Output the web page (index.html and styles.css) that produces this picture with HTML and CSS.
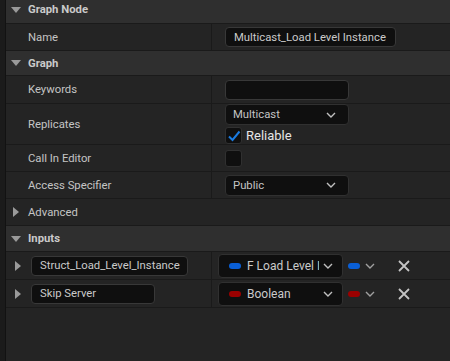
FILE: index.html
```html
<!DOCTYPE html>
<html>
<head>
<meta charset="utf-8">
<link rel="stylesheet" href="styles.css">
</head>
<body>
<div class="panel">
  <div class="cat h23 first">
    <svg class="tri" width="10" height="6" viewBox="0 0 10 6"><path d="M0 0H10L5 6Z" fill="#9a9a9a"/></svg>
    <span class="cat-title">Graph Node</span>
  </div>
  <div class="row h26">
    <div class="lbl">Name</div>
    <div class="val"><div class="txt name-box">Multicast_Load Level Instance</div></div>
  </div>
  <div class="cat h24">
    <svg class="tri" width="10" height="6" viewBox="0 0 10 6"><path d="M0 0H10L5 6Z" fill="#9a9a9a"/></svg>
    <span class="cat-title">Graph</span>
  </div>
  <div class="row h27">
    <div class="lbl">Keywords</div>
    <div class="val"><div class="txt kw-box"></div></div>
  </div>
  <div class="row h40">
    <div class="lbl">Replicates</div>
    <div class="val col">
      <div class="combo">Multicast<svg class="chev" width="10" height="6" viewBox="0 0 10 6"><path d="M1 1L5 5L9 1" stroke="#c0c0c0" stroke-width="1.4" fill="none"/></svg></div>
      <div class="chk-line">
        <div class="chk"><svg width="14" height="12" viewBox="0 0 14 12"><path d="M2 6.5L5.5 10L12.5 1.5" stroke="#1a7be0" stroke-width="2" fill="none"/></svg></div>
        <span class="chk-lbl">Reliable</span>
      </div>
    </div>
  </div>
  <div class="row h26">
    <div class="lbl">Call In Editor</div>
    <div class="val"><div class="chk"></div></div>
  </div>
  <div class="row h26">
    <div class="lbl">Access Specifier</div>
    <div class="val"><div class="combo">Public<svg class="chev" width="10" height="6" viewBox="0 0 10 6"><path d="M1 1L5 5L9 1" stroke="#c0c0c0" stroke-width="1.4" fill="none"/></svg></div></div>
  </div>
  <div class="cat sub h26">
    <svg class="tri r" width="6" height="10" viewBox="0 0 6 10"><path d="M0 0V10L6 5Z" fill="#9a9a9a"/></svg>
    <span class="plain">Advanced</span>
  </div>
  <div class="cat h25">
    <svg class="tri" width="10" height="6" viewBox="0 0 10 6"><path d="M0 0H10L5 6Z" fill="#9a9a9a"/></svg>
    <span class="cat-title">Inputs</span>
  </div>
  <div class="row h27">
    <div class="lbl pin-lbl">
      <svg class="tri r small" width="6" height="10" viewBox="0 0 6 10"><path d="M0 0V10L6 5Z" fill="#9a9a9a"/></svg>
      <div class="txt pin-name w1">Struct_Load_Level_Instance</div>
    </div>
    <div class="val pin-val">
      <div class="type"><span class="pill blue"></span><span class="type-name">F Load Level I</span><svg class="chev" width="10" height="6" viewBox="0 0 10 6"><path d="M1 1L5 5L9 1" stroke="#c0c0c0" stroke-width="1.4" fill="none"/></svg></div>
      <span class="pill blue mini"></span><svg class="chev2" width="10" height="6" viewBox="0 0 10 6"><path d="M1 1L5 5L9 1" stroke="#a0a0a0" stroke-width="1.4" fill="none"/></svg>
      <svg class="x" width="12" height="12" viewBox="0 0 12 12"><path d="M1 1L11 11M11 1L1 11" stroke="#c4c4c4" stroke-width="1.8"/></svg>
    </div>
  </div>
  <div class="row h27">
    <div class="lbl pin-lbl">
      <svg class="tri r small" width="6" height="10" viewBox="0 0 6 10"><path d="M0 0V10L6 5Z" fill="#9a9a9a"/></svg>
      <div class="txt pin-name w2">Skip Server</div>
    </div>
    <div class="val pin-val">
      <div class="type"><span class="pill red"></span><span class="type-name">Boolean</span><svg class="chev" width="10" height="6" viewBox="0 0 10 6"><path d="M1 1L5 5L9 1" stroke="#c0c0c0" stroke-width="1.4" fill="none"/></svg></div>
      <span class="pill red mini"></span><svg class="chev2" width="10" height="6" viewBox="0 0 10 6"><path d="M1 1L5 5L9 1" stroke="#a0a0a0" stroke-width="1.4" fill="none"/></svg>
      <svg class="x" width="12" height="12" viewBox="0 0 12 12"><path d="M1 1L11 11M11 1L1 11" stroke="#c4c4c4" stroke-width="1.8"/></svg>
    </div>
  </div>
  <div class="rest"></div>
</div>
</body>
</html>
```

FILE: styles.css
```css
html, body {
  margin: 0;
  padding: 0;
  height: 100%;
}
body {
  background: #1b1b1b;
  font-family: Roboto, "Liberation Sans", sans-serif;
  font-size: 11.3px;
  color: #c4c4c4;
  overflow: hidden;
}
.panel {
  margin-left: 5px;
  border-left: 1px solid #121212;
  height: 100%;
  display: flex;
  flex-direction: column;
  background: #242424;
}
.cat {
  display: flex;
  align-items: center;
  background: #2f2f2f;
  border-bottom: 1px solid #1a1a1a;
  flex: none;
  box-sizing: border-box;
}
.cat.first {
  padding-bottom: 4px;
  height: 24px;
}
.cat.sub {
  background: #242424;
}
.tri {
  margin-left: 5px;
  margin-right: 7px;
  flex: none;
}
.tri.r {
  margin-left: 7px;
  margin-right: 9px;
}
.cat-title {
  font-weight: bold;
  color: #cacaca;
}
.plain {
  color: #c4c4c4;
}
.row {
  display: flex;
  border-bottom: 1px solid #1a1a1a;
  flex: none;
}
.h23 { height: 23px; }
.h24 { height: 24px; }
.h25 { height: 25px; }
.h26 { height: 26px; }
.h27 { height: 27px; }
.h40 { height: 40px; }
.cat.h24, .cat.h25, .cat.h26 { box-sizing: content-box; }
.lbl {
  width: 206px;
  border-right: 1px solid #1a1a1a;
  display: flex;
  align-items: center;
  padding-left: 22px;
  box-sizing: border-box;
  flex: none;
}
.val {
  display: flex;
  align-items: center;
  padding-left: 13px;
  flex: 1;
}
.val.col {
  flex-direction: column;
  align-items: flex-start;
  justify-content: flex-start;
}
.txt {
  background: #0f0f0f;
  border: 1px solid #383838;
  border-radius: 4px;
  box-sizing: border-box;
  display: flex;
  align-items: center;
  padding-left: 8px;
  color: #cacaca;
}
.name-box {
  width: 171px;
  height: 20px;
}
.kw-box {
  width: 124px;
  height: 20px;
}
.combo {
  width: 124px;
  height: 21px;
  background: #0f0f0f;
  border: 1px solid #303030;
  border-radius: 4px;
  box-sizing: border-box;
  display: flex;
  align-items: center;
  padding-left: 7px;
  padding-right: 12px;
  justify-content: space-between;
  color: #c4c4c4;
}
.chk-line {
  display: flex;
  align-items: center;
  margin-top: 2px;
}
.chk {
  width: 17px;
  height: 17px;
  background: #0f0f0f;
  border: 1px solid #303030;
  border-radius: 3px;
  box-sizing: border-box;
  display: flex;
  align-items: center;
  justify-content: center;
}
.chk-lbl {
  font-size: 13px;
  color: #e6e6e6;
  margin-left: 4px;
}
.pin-lbl {
  padding-left: 0;
}
.tri.small {
  margin-left: 9px;
  margin-right: 10px;
}
.pin-name {
  height: 20px;
  padding-left: 8px;
}
.w1 { width: 157px; }
.w2 { width: 124px; }
.pin-val {
  padding-left: 6px;
}
.type {
  width: 125px;
  height: 24px;
  background: #0f0f0f;
  border: 1px solid #303030;
  border-radius: 4px;
  box-sizing: border-box;
  display: flex;
  align-items: center;
  padding-left: 10px;
  padding-right: 9px;
  color: #cacaca;
  font-size: 12px;
}
.type-name {
  flex: 1;
  margin-left: 6px;
  white-space: nowrap;
  overflow: hidden;
}
.type .chev {
  margin-left: 4px;
}
.pill {
  display: inline-block;
  width: 12px;
  height: 6px;
  border-radius: 3px;
  flex: none;
}
.pill.blue { background: #0a5fd6; }
.pill.red { background: #9b0000; }
.pill.mini {
  margin-left: 5px;
}
.chev2 {
  margin-left: 5px;
}
.x {
  margin-left: 23px;
}
.rest {
  flex: 1;
  background: #242424;
}
```
